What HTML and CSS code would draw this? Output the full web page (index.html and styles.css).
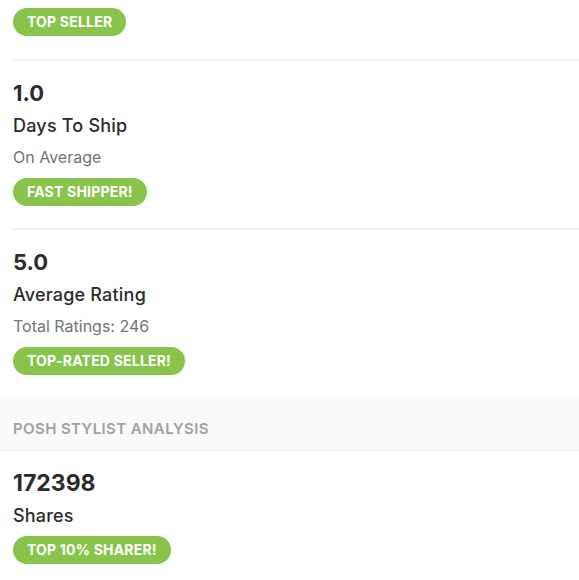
FILE: index.html
```html
<!DOCTYPE html>
<html>
<head>
<meta charset="utf-8">
<link rel="stylesheet" href="styles.css">
</head>
<body>
<div class="stat first">
  <span class="badge">Top Seller</span>
</div>
<div class="stat">
  <div class="num">1.0</div>
  <div class="label">Days To Ship</div>
  <div class="sub">On Average</div>
  <span class="badge">Fast Shipper!</span>
</div>
<div class="stat before-header">
  <div class="num">5.0</div>
  <div class="label">Average Rating</div>
  <div class="sub">Total Ratings: 246</div>
  <span class="badge">Top-Rated Seller!</span>
</div>
<div class="header">Posh Stylist Analysis</div>
<div class="stat last">
  <div class="num">172398</div>
  <div class="label">Shares</div>
  <span class="badge">Top 10% Sharer!</span>
</div>
</body>
</html>
```
FILE: styles.css
```css
html, body {
  margin: 0;
  padding: 0;
  background: #fff;
}
body {
  font-family: "Inter", "Open Sans", sans-serif;
  color: #2b2b2b;
  width: 579px;
  overflow: hidden;
}
.stat {
  margin-left: 13px;
  padding: 19px 0 22px 0;
  border-bottom: 2px solid #f3f3f3;
  display: flex;
  flex-direction: column;
  align-items: flex-start;
}
.stat.first {
  padding-top: 8px;
  padding-bottom: 23px;
}
.stat.before-header {
  border-bottom: none;
  padding-bottom: 22px;
}
.stat.last {
  border-bottom: none;
  padding-top: 19px;
}
.num {
  font-size: 22px;
  font-weight: 700;
  line-height: 26px;
}
.last .num {
  font-size: 23px;
}
.label {
  font-size: 18px;
  font-weight: 500;
  letter-spacing: 0.2px;
  line-height: 24px;
  margin-top: 8px;
}
.sub {
  font-size: 16px;
  line-height: 20px;
  color: #747474;
  margin-top: 9px;
}
.badge {
  display: inline-block;
  background: #88c34c;
  color: #fff;
  font-size: 14px;
  font-weight: 700;
  letter-spacing: 0.2px;
  text-transform: uppercase;
  height: 28px;
  line-height: 28px;
  padding: 0 14px;
  border-radius: 14px;
  margin-top: 11px;
}
.label + .badge {
  margin-top: 8px;
}
.stat.first .badge {
  margin-top: 0;
}
.header {
  background: #fafafa;
  border-bottom: 2px solid #f2f2f2;
  padding: 22px 13px 10px;
  line-height: 20px;
  font-size: 15px;
  font-weight: 600;
  color: #a0a0a0;
  text-transform: uppercase;
  letter-spacing: 0.4px;
}
```
